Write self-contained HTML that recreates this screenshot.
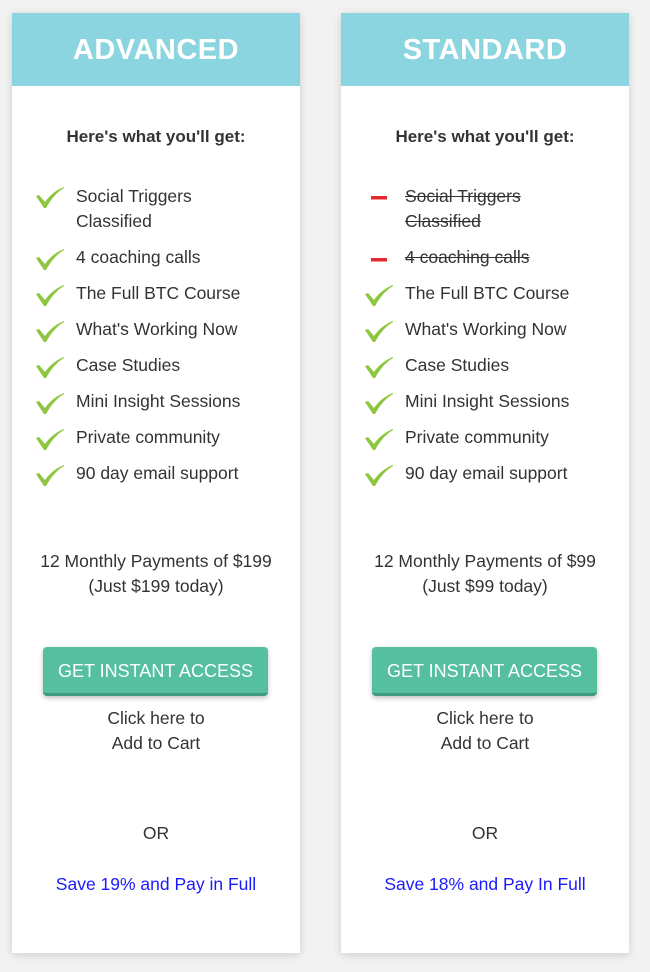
<!DOCTYPE html>
<html><head><meta charset="utf-8"><style>
body{margin:0;width:650px;height:972px;background:#f2f2f2;font-family:"Liberation Sans",sans-serif;color:#333;position:relative;overflow:hidden}
.card{position:absolute;top:13px;width:288px;height:940px;background:#fff;box-shadow:0 2px 8px rgba(0,0,0,.15)}
.hd{height:73px;background:#8ad5e0;color:#fff;font-weight:bold;font-size:29px;text-align:center;line-height:74px;letter-spacing:.5px}
.t{position:absolute;left:0;width:288px;text-align:center;font-size:17.5px;line-height:25px}
.h{font-weight:bold;font-size:17px;top:111px}
.it{position:absolute;left:64px;font-size:17.5px;line-height:25px}
.ic{position:absolute;left:24px;width:28px;height:22px}
.s{text-decoration:line-through}
.btn{position:absolute;left:31px;top:634px;width:225px;height:46px;background:#55bfa0;border-bottom:3px solid #3f9a80;border-radius:4px;color:#fff;font-size:18px;line-height:48px;text-align:center;box-shadow:0 2px 5px rgba(0,0,0,.25)}
.bl{color:#1a1aff}
</style></head><body>
<svg width="0" height="0" style="position:absolute"><defs><symbol id="ck" viewBox="0 0 28 22"><path d="M0 9 L3 8 L9 15 C14 8 20 3 28 0 L28 1 C21 5 15 12 10 21 L8 21 Z" fill="#8dc63f"/></symbol><symbol id="dh" viewBox="0 0 28 22"><rect x="6" y="9" width="16" height="3.5" fill="#e8282f"/></symbol></defs></svg>

<div class="card" style="left:12px">
<div class="hd">ADVANCED</div>
<div class="t h">Here's what you'll get:</div>
<svg class="ic" style="top:174px"><use href="#ck"/></svg><div class="it" style="top:171px">Social Triggers<br>Classified</div>
<svg class="ic" style="top:236px"><use href="#ck"/></svg><div class="it" style="top:232px">4 coaching calls</div>
<svg class="ic" style="top:272px"><use href="#ck"/></svg><div class="it" style="top:268px">The Full BTC Course</div>
<svg class="ic" style="top:308px"><use href="#ck"/></svg><div class="it" style="top:304px">What's Working Now</div>
<svg class="ic" style="top:344px"><use href="#ck"/></svg><div class="it" style="top:340px">Case Studies</div>
<svg class="ic" style="top:380px"><use href="#ck"/></svg><div class="it" style="top:376px">Mini Insight Sessions</div>
<svg class="ic" style="top:416px"><use href="#ck"/></svg><div class="it" style="top:412px">Private community</div>
<svg class="ic" style="top:452px"><use href="#ck"/></svg><div class="it" style="top:448px">90 day email support</div>
<div class="t" style="top:536px">12 Monthly Payments of $199<br>(Just $199 today)</div>
<div class="btn">GET INSTANT ACCESS</div>
<div class="t" style="top:693px">Click here to<br>Add to Cart</div>
<div class="t" style="top:808px">OR</div>
<div class="t bl" style="top:859px">Save 19% and Pay in Full</div>
</div>

<div class="card" style="left:341px">
<div class="hd">STANDARD</div>
<div class="t h">Here's what you'll get:</div>
<svg class="ic" style="top:174px"><use href="#dh"/></svg><div class="it s" style="top:171px">Social Triggers<br>Classified</div>
<svg class="ic" style="top:236px"><use href="#dh"/></svg><div class="it s" style="top:232px">4 coaching calls</div>
<svg class="ic" style="top:272px"><use href="#ck"/></svg><div class="it" style="top:268px">The Full BTC Course</div>
<svg class="ic" style="top:308px"><use href="#ck"/></svg><div class="it" style="top:304px">What's Working Now</div>
<svg class="ic" style="top:344px"><use href="#ck"/></svg><div class="it" style="top:340px">Case Studies</div>
<svg class="ic" style="top:380px"><use href="#ck"/></svg><div class="it" style="top:376px">Mini Insight Sessions</div>
<svg class="ic" style="top:416px"><use href="#ck"/></svg><div class="it" style="top:412px">Private community</div>
<svg class="ic" style="top:452px"><use href="#ck"/></svg><div class="it" style="top:448px">90 day email support</div>
<div class="t" style="top:536px">12 Monthly Payments of $99<br>(Just $99 today)</div>
<div class="btn">GET INSTANT ACCESS</div>
<div class="t" style="top:693px">Click here to<br>Add to Cart</div>
<div class="t" style="top:808px">OR</div>
<div class="t bl" style="top:859px">Save 18% and Pay In Full</div>
</div>
</body></html>
